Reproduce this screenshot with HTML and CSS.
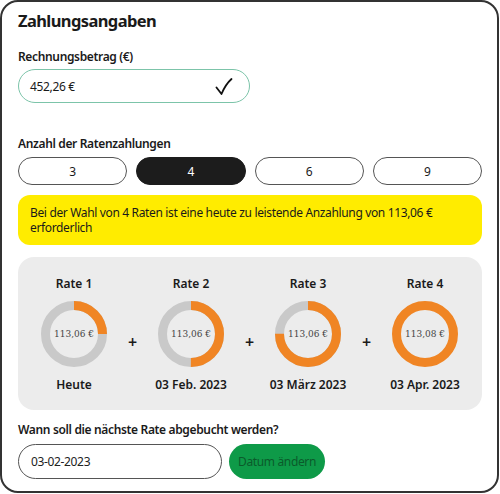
FILE: index.html
```html
<!DOCTYPE html>
<html lang="de">
<head>
<meta charset="utf-8">
<link rel="stylesheet" href="styles.css">
</head>
<body>
<div class="card">
  <h1 class="title">Zahlungsangaben</h1>
  <div class="label">Rechnungsbetrag (€)</div>
  <div class="amount">
    <span>452,26 €</span>
    <svg class="check" width="18" height="18" viewBox="0 0 18 18"><path d="M1.5 9.5 L6.5 16 C9 10 12 5 16.5 1" fill="none" stroke="#111" stroke-width="1.8" stroke-linecap="round" stroke-linejoin="round"/></svg>
  </div>
  <div class="label label-gap">Anzahl der Ratenzahlungen</div>
  <div class="options">
    <div class="opt">3</div>
    <div class="opt opt-on">4</div>
    <div class="opt">6</div>
    <div class="opt">9</div>
  </div>
  <div class="notice">Bei der Wahl von 4 Raten ist eine heute zu leistende Anzahlung von 113,06 € erforderlich</div>
  <div class="plan">
    <div class="rate">
      <div class="rate-name">Rate 1</div>
      <div class="donut">
        <svg width="66" height="66" viewBox="0 0 66 66"><circle cx="33" cy="33" r="28.5" fill="none" stroke="#c9c9c9" stroke-width="9"/><circle cx="33" cy="33" r="28.5" fill="none" stroke="#f08524" stroke-width="9" stroke-dasharray="44.77 200" transform="rotate(-90 33 33)"/></svg>
        <span class="donut-val">113,06 €</span>
      </div>
      <div class="rate-date">Heute</div>
    </div>
    <div class="plus">+</div>
    <div class="rate">
      <div class="rate-name">Rate 2</div>
      <div class="donut">
        <svg width="66" height="66" viewBox="0 0 66 66"><circle cx="33" cy="33" r="28.5" fill="none" stroke="#c9c9c9" stroke-width="9"/><circle cx="33" cy="33" r="28.5" fill="none" stroke="#f08524" stroke-width="9" stroke-dasharray="89.54 200" transform="rotate(-90 33 33)"/></svg>
        <span class="donut-val">113,06 €</span>
      </div>
      <div class="rate-date">03 Feb. 2023</div>
    </div>
    <div class="plus">+</div>
    <div class="rate">
      <div class="rate-name">Rate 3</div>
      <div class="donut">
        <svg width="66" height="66" viewBox="0 0 66 66"><circle cx="33" cy="33" r="28.5" fill="none" stroke="#c9c9c9" stroke-width="9"/><circle cx="33" cy="33" r="28.5" fill="none" stroke="#f08524" stroke-width="9" stroke-dasharray="134.3 200" transform="rotate(-90 33 33)"/></svg>
        <span class="donut-val">113,06 €</span>
      </div>
      <div class="rate-date">03 März 2023</div>
    </div>
    <div class="plus">+</div>
    <div class="rate">
      <div class="rate-name">Rate 4</div>
      <div class="donut">
        <svg width="66" height="66" viewBox="0 0 66 66"><circle cx="33" cy="33" r="28.5" fill="none" stroke="#f08524" stroke-width="9"/></svg>
        <span class="donut-val">113,08 €</span>
      </div>
      <div class="rate-date">03 Apr. 2023</div>
    </div>
  </div>
  <div class="label q-label">Wann soll die nächste Rate abgebucht werden?</div>
  <div class="date-row">
    <div class="date-input">03-02-2023</div>
    <div class="date-btn">Datum ändern</div>
  </div>
</div>
</body>
</html>
```
FILE: styles.css
```css
* { box-sizing: border-box; }
html, body { margin: 0; padding: 0; background: #fff; }
body { font-family: "Noto Sans", "Open Sans", sans-serif; color: #1a1a1a; letter-spacing: -0.35px; }
.card {
  width: 499px;
  height: 493px;
  border: 2px solid #333;
  border-radius: 18px;
  padding: 7px 15px 0 16px;
  display: flex;
  flex-direction: column;
}
.title {
  margin: 0;
  font-size: 16.5px;
  line-height: 24px;
  font-weight: 700;
  letter-spacing: -0.6px;
}
.label {
  margin-top: 16px;
  font-size: 12px;
  line-height: 16px;
  font-weight: 600;
}
.amount {
  margin-top: 4px;
  width: 232px;
  height: 34px;
  border: 1px solid #7cc4a9;
  border-radius: 17px;
  display: flex;
  align-items: center;
  justify-content: space-between;
  padding: 0 16px 0 11px;
  font-size: 12px;
}
.check { margin-top: 1px; }
.label-gap { margin-top: 33px; }
.options {
  margin-top: 5px;
  display: grid;
  grid-template-columns: repeat(4, 1fr);
  gap: 9px;
}
.opt {
  height: 28px;
  border: 1px solid #555;
  border-radius: 14px;
  display: flex;
  align-items: center;
  justify-content: center;
  font-size: 12px;
}
.opt-on { background: #1c1c1c; border-color: #1c1c1c; color: #fff; }
.notice {
  margin-top: 10px;
  background: #ffec00;
  border-radius: 12px;
  padding: 10px 12px;
  font-size: 12px;
  line-height: 15px;
}
.plan {
  margin-top: 12px;
  background: #ececec;
  border-radius: 16px;
  height: 153px;
  padding: 19px 7px 0 6px;
  display: grid;
  grid-template-columns: 100px 17px 100px 17px 100px 17px 100px;
}
.rate { display: flex; flex-direction: column; align-items: center; }
.rate-name, .rate-date { font-size: 12px; line-height: 16px; font-weight: 600; letter-spacing: 0; }
.donut {
  margin-top: 9px;
  width: 66px;
  height: 66px;
  position: relative;
}
.donut svg { display: block; }
.donut-val {
  position: absolute;
  inset: 0;
  display: flex;
  align-items: center;
  justify-content: center;
  font-family: "DejaVu Serif", "Liberation Serif", serif;
  font-size: 9px;
  letter-spacing: 0;
  color: #444;
}
.rate-date { margin-top: 10px; }
.plus {
  display: flex;
  justify-content: center;
  padding-top: 55px;
  font-size: 16px;
  font-weight: 600;
}
.q-label { margin-top: 12px; }
.date-row { margin-top: 6px; display: flex; gap: 7px; }
.date-input {
  width: 204px;
  height: 35px;
  border: 1px solid #555;
  border-radius: 18px;
  display: flex;
  align-items: center;
  padding-left: 12px;
  font-size: 12px;
  color: #222;
}
.date-btn {
  width: 96px;
  height: 35px;
  border-radius: 18px;
  background: #0e9a48;
  color: #0b5a2b;
  display: flex;
  align-items: center;
  justify-content: center;
  font-size: 12px;
}
```
